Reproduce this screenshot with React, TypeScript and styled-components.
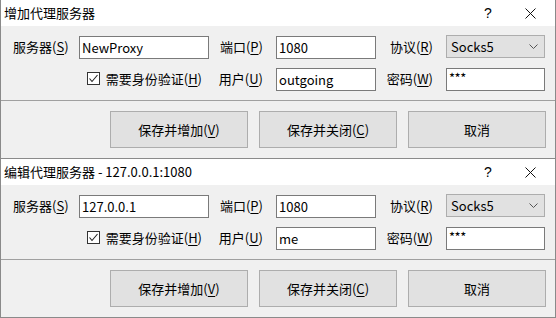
import styled, { createGlobalStyle } from "styled-components";

const GlobalStyle = createGlobalStyle`
  html, body {
    margin: 0;
    padding: 0;
    background: #f0f0f0;
  }
  body {
    font-family: "Noto Sans CJK SC", "Noto Sans", sans-serif;
    font-size: 13px;
    color: #000;
  }
`;

const Dialog = styled.section`
  width: 556px;
  height: 159px;
  display: flex;
  flex-direction: column;
  box-sizing: border-box;
  border: 1px solid #8a8a8a;
  border-top: none;
  background: #f0f0f0;
`;

const TitleBar = styled.div`
  height: 26px;
  flex: none;
  display: flex;
  align-items: center;
  background: #fff;
  padding: 0 4px 0 3px;
`;

const TitleText = styled.div`
  flex: 1;
  line-height: 16px;
  white-space: nowrap;
`;

const CaptionButton = styled.div`
  width: 42px;
  height: 26px;
  display: flex;
  align-items: center;
  justify-content: center;
  font-family: "Segoe UI", "Liberation Sans", sans-serif;
  font-size: 14px;
`;

const FormGrid = styled.div`
  display: grid;
  grid-template-columns: 53px 130px 41px 100px 44px 99px;
  grid-auto-rows: 23px;
  column-gap: 13px;
  row-gap: 9px;
  padding: 10px 0 0 12px;
`;

const Label = styled.div<{ $right?: boolean }>`
  display: flex;
  align-items: center;
  justify-content: ${(p) => (p.$right ? "flex-end" : "flex-start")};
  white-space: nowrap;
  line-height: 16px;
  margin-top: -1px;
`;

const Key = styled.u`
  text-underline-offset: 2px;
`;

const TextField = styled.div`
  box-sizing: border-box;
  height: 23px;
  border: 1px solid #7a7a7a;
  background: #fff;
  padding: 0 2px;
  display: flex;
  align-items: center;
  line-height: 16px;
  white-space: nowrap;
  overflow: hidden;
`;

const Masked = styled.span`
  align-self: flex-start;
  margin-top: 1px;
  letter-spacing: -0.5px;
`;

const Combo = styled.div`
  box-sizing: border-box;
  height: 23px;
  margin-top: -1px;
  border: 1px solid #adadad;
  background: #e1e1e1;
  padding: 0 6px 0 4px;
  display: flex;
  align-items: center;
  justify-content: space-between;
  line-height: 16px;
`;

const CheckCell = styled.label`
  grid-column: 1 / span 2;
  justify-self: end;
  margin-right: 7px;
  display: flex;
  align-items: center;
  gap: 6px;
  white-space: nowrap;
  line-height: 16px;
  margin-top: -2px;
`;

const CheckBox = styled.span`
  width: 13px;
  height: 13px;
  box-sizing: border-box;
  border: 1px solid #333;
  background: #fff;
  display: flex;
  align-items: center;
  justify-content: center;
`;

const Separator = styled.div`
  height: 1px;
  margin-top: 9px;
  background: #a0a0a0;
`;

const ButtonRow = styled.div`
  display: flex;
  justify-content: flex-end;
  gap: 11px;
  padding: 10px 9px 0 0;
`;

const Button = styled.div`
  box-sizing: border-box;
  width: 138px;
  height: 37px;
  border: 1px solid #adadad;
  background: #e1e1e1;
  display: flex;
  align-items: center;
  justify-content: center;
  line-height: 16px;
  white-space: nowrap;
`;

type ProxyDialogProps = {
  title: string;
  server: string;
  port: string;
  user: string;
};

function ProxyDialog({ title, server, port, user }: ProxyDialogProps) {
  return (
    <Dialog>
      <TitleBar>
        <TitleText>{title}</TitleText>
        <CaptionButton>?</CaptionButton>
        <CaptionButton>
          <svg width="11" height="11" viewBox="0 0 11 11">
            <path d="M0.5 0.5 L10.5 10.5 M10.5 0.5 L0.5 10.5" stroke="#111" strokeWidth="1" fill="none" />
          </svg>
        </CaptionButton>
      </TitleBar>
      <FormGrid>
        <Label>
          服务器(<Key>S</Key>)
        </Label>
        <TextField>{server}</TextField>
        <Label $right>
          端口(<Key>P</Key>)
        </Label>
        <TextField>{port}</TextField>
        <Label $right>
          协议(<Key>R</Key>)
        </Label>
        <Combo>
          <span>Socks5</span>
          <svg width="9" height="5" viewBox="0 0 9 5">
            <path d="M0.5 0.5 L4.5 4.5 L8.5 0.5" stroke="#555" strokeWidth="1" fill="none" />
          </svg>
        </Combo>

        <CheckCell>
          <CheckBox>
            <svg width="11" height="11" viewBox="0 0 11 11">
              <path d="M1.5 5.5 L4 8.5 L9.5 2" stroke="#222" strokeWidth="1.1" fill="none" />
            </svg>
          </CheckBox>
          <span>
            需要身份验证(<Key>H</Key>)
          </span>
        </CheckCell>
        <Label $right>
          用户(<Key>U</Key>)
        </Label>
        <TextField>{user}</TextField>
        <Label $right>
          密码(<Key>W</Key>)
        </Label>
        <TextField>
          <Masked>***</Masked>
        </TextField>
      </FormGrid>
      <Separator />
      <ButtonRow>
        <Button>
          保存并增加(<Key>V</Key>)
        </Button>
        <Button>
          保存并关闭(<Key>C</Key>)
        </Button>
        <Button>取消</Button>
      </ButtonRow>
    </Dialog>
  );
}

export default function App() {
  return (
    <>
      <GlobalStyle />
      <ProxyDialog title="增加代理服务器" server="NewProxy" port="1080" user="outgoing" />
      <ProxyDialog
        title="编辑代理服务器 - 127.0.0.1:1080"
        server="127.0.0.1"
        port="1080"
        user="me"
      />
    </>
  );
}
